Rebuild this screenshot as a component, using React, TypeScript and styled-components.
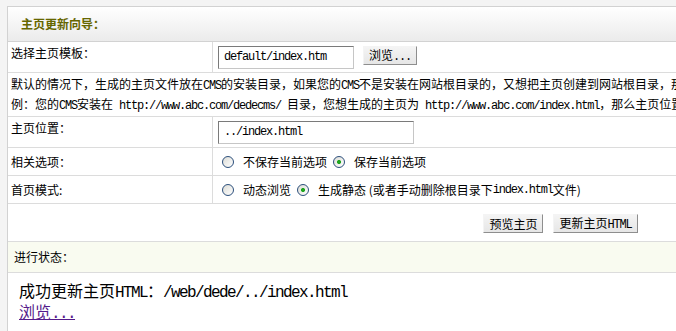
import * as React from 'react'
import styled, { createGlobalStyle } from 'styled-components'

const GlobalStyle = createGlobalStyle`
  html, body {
    margin: 0;
    overflow: hidden;
    background: #f4f4f4;
  }
  body {
    font-family: "Noto Sans CJK SC", "Noto Sans", sans-serif;
    font-size: 12px;
    line-height: 16px;
    color: #000;
  }
`

const Page = styled.div`
  padding: 6px 0 0 7px;
`

const Panel = styled.div`
  width: 1105px;
  border: 1px solid #d2d2d2;
  background: #fff;
`

const Header = styled.div`
  box-sizing: border-box;
  height: 35px;
  display: flex;
  align-items: center;
  padding-left: 13px;
  background: linear-gradient(#ffffff, #ebebeb);
  border-bottom: 1px solid #d2d2d2;
  font-weight: bold;
  color: #666600;
`

const Row = styled.div<{ $h: number }>`
  box-sizing: border-box;
  display: grid;
  grid-template-columns: 205px 1fr;
  height: ${(p) => p.$h}px;
  border-bottom: 1px solid #dcdcdc;
`

const FullRow = styled.div<{ $h: number; $bg?: string }>`
  box-sizing: border-box;
  display: flex;
  align-items: center;
  height: ${(p) => p.$h}px;
  border-bottom: 1px solid #dcdcdc;
  background: ${(p) => p.$bg || '#fff'};
`

const Label = styled.div<{ $lift?: boolean }>`
  box-sizing: border-box;
  display: flex;
  align-items: center;
  padding-left: 3px;
  padding-bottom: ${(p) => (p.$lift ? 8 : 0)}px;
  border-right: 1px solid #dcdcdc;
`

const Field = styled.div`
  display: flex;
  align-items: center;
  padding-left: 5px;
  white-space: nowrap;
`

const Note = styled.div`
  box-sizing: border-box;
  height: 44px;
  display: flex;
  flex-direction: column;
  justify-content: center;
  padding-left: 3px;
  line-height: 18px;
  white-space: nowrap;
  overflow: hidden;
  border-bottom: 1px solid #dcdcdc;
`

// latin runs: half the width of a CJK glyph, as in the original Song face
const Mono = styled.span<{ $size?: number }>`
  font-family: "Liberation Mono", monospace;
  font-size: ${(p) => p.$size ?? 12}px;
  letter-spacing: -0.1em;
`

const TextInput = styled.input<{ $w: number }>`
  box-sizing: border-box;
  width: ${(p) => p.$w}px;
  height: 23px;
  margin: 0;
  padding: 0 5px;
  border: 1px solid;
  border-color: #7a7a7a #c6c6c6 #c6c6c6 #7a7a7a;
  font-family: "Liberation Mono", monospace;
  font-size: 12px;
  letter-spacing: -1.2px;
  color: #000;
  outline: none;
`

const Button = styled.button`
  box-sizing: border-box;
  height: 19px;
  margin: 0;
  padding: 0 5px;
  border: 1px solid;
  border-color: #f4f4f4 #8e8e8e #8e8e8e #f4f4f4;
  background: linear-gradient(#f4f4f4, #e6e6e6);
  font-family: "Noto Sans CJK SC", sans-serif;
  font-size: 12px;
  line-height: 15px;
  color: #000;
`

const BrowseButton = styled(Button)`
  margin-left: 9px;
  margin-top: -3px;
`

const Radio = styled.input.attrs({ type: 'radio' })`
  appearance: none;
  box-sizing: border-box;
  width: 12px;
  height: 12px;
  margin: 0 9px 0 4px;
  border: 1px solid #2c4f7c;
  border-radius: 50%;
  background: linear-gradient(135deg, #dcdcd6, #ffffff);
  &:checked {
    background: radial-gradient(circle, #1fa51f 0 1.6px, transparent 2.4px),
      linear-gradient(135deg, #dcdcd6, #ffffff);
  }
`

const Choice = styled.label`
  display: flex;
  align-items: center;
  margin-right: 2px;
`

const Actions = styled.div`
  flex: 1;
  display: flex;
  justify-content: center;
  gap: 10px;
  padding-top: 1px;
`

const StatusLabel = styled.div`
  padding-left: 6px;
`

const Result = styled.div`
  padding: 8px 11px;
  height: 60px;
  font-size: 16px;
  line-height: 18px;
  white-space: nowrap;
`

const Link = styled.a`
  color: #551a8b;
  text-decoration: underline;
`

export default function App() {
  return (
    <Page>
      <GlobalStyle />
      <Panel>
        <Header>主页更新向导：</Header>
        <Row $h={31}>
          <Label $lift>选择主页模板：</Label>
          <Field>
            <TextInput $w={136} defaultValue="default/index.htm" />
            <BrowseButton>
              浏览<Mono>...</Mono>
            </BrowseButton>
          </Field>
        </Row>
        <Note>
          <div>
            默认的情况下，生成的主页文件放在<Mono>CMS</Mono>的安装目录，如果您的<Mono>CMS</Mono>
            不是安装在网站根目录的，又想把主页创建到网站根目录，那么请参照下面的例子设置主页位置。
          </div>
          <div>
            例：您的<Mono>CMS</Mono>安装在<Mono> http://www.abc.com/dedecms/ </Mono>
            目录，您想生成的主页为<Mono> http://www.abc.com/index.html</Mono>
            ，那么主页位置就应该用：<Mono>"../index.html"</Mono>。
          </div>
        </Note>
        <Row $h={31}>
          <Label $lift>主页位置：</Label>
          <Field>
            <TextInput $w={196} defaultValue="../index.html" />
          </Field>
        </Row>
        <Row $h={28}>
          <Label>相关选项：</Label>
          <Field>
            <Choice>
              <Radio name="saveset" />
              不保存当前选项
            </Choice>
            <Choice>
              <Radio name="saveset" defaultChecked />
              保存当前选项
            </Choice>
          </Field>
        </Row>
        <Row $h={28}>
          <Label>首页模式:</Label>
          <Field>
            <Choice>
              <Radio name="showmod" />
              动态浏览
            </Choice>
            <Choice>
              <Radio name="showmod" defaultChecked />
              生成静态 (或者手动删除根目录下<Mono>index.html</Mono>文件)
            </Choice>
          </Field>
        </Row>
        <FullRow $h={38}>
          <Actions>
            <Button>预览主页</Button>
            <Button>
              更新主页<Mono>HTML</Mono>
            </Button>
          </Actions>
        </FullRow>
        <FullRow $h={31} $bg="#f9fbf0">
          <StatusLabel>进行状态：</StatusLabel>
        </FullRow>
        <Result>
          <div>
            成功更新主页<Mono $size={16}>HTML</Mono>：<Mono $size={16}>/web/dede/../index.html</Mono>
          </div>
          <Link href="#">
            浏览<Mono $size={16}>...</Mono>
          </Link>
        </Result>
      </Panel>
    </Page>
  )
}
